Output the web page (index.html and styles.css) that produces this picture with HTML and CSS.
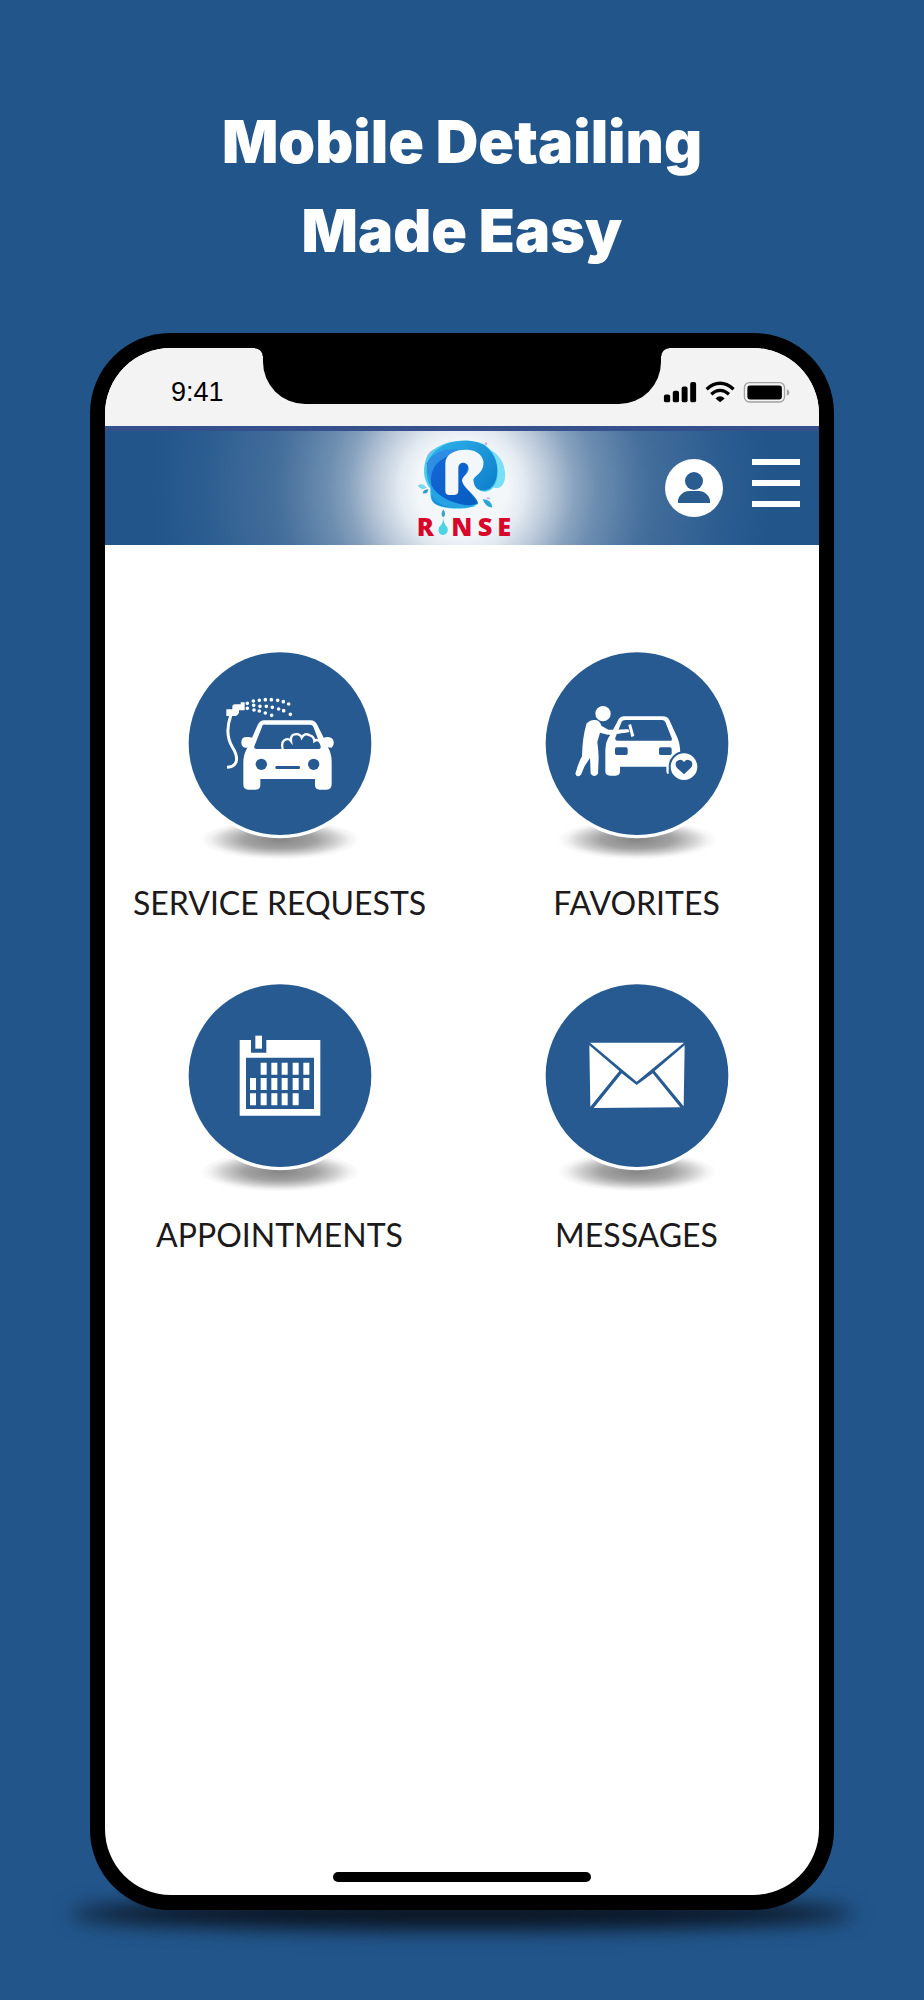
FILE: index.html
```html
<!DOCTYPE html>
<html lang="en">

<head>
  <meta charset="UTF-8">
  <meta name="viewport" content="width=device-width, initial-scale=1.0">
  <title>Rinse - Mobile Detailing Made Easy</title>
  <link rel="stylesheet" href="styles.css">
</head>

<body>
  <h1 class="headline">Mobile Detailing<br>Made Easy</h1>

  <div class="phone">
    <div class="screen">
      <div class="notch"></div>

      <div class="status-bar">
        <span class="time">9:41</span>
        <svg class="status-icons" viewBox="550 180 390 70" aria-hidden="true">
          <!-- signal -->
          <rect x="553" y="221" width="19" height="24" rx="6" />
          <rect x="580" y="210" width="19" height="35" rx="6" />
          <rect x="607" y="197" width="18" height="48" rx="6" />
          <rect x="633" y="183" width="18" height="62" rx="6" />
          <!-- wifi -->
          <g fill="none" stroke="#000" stroke-width="10">
            <path d="M683 205Q724 169 765 205" />
            <path d="M697 220Q724 197 751 220" />
          </g>
          <path d="M710 233Q724 220 738 233L724 245Z" />
          <!-- battery -->
          <rect x="798" y="185" width="122" height="59" rx="15" fill="none" stroke="#a3a3a3" stroke-width="4" />
          <rect x="807" y="194" width="105" height="42" rx="7" />
          <path d="M927 205Q935 208 935 215Q935 222 927 225Z" fill="#a3a3a3" />
        </svg>
      </div>

      <header class="app-header">
        <svg class="logo" viewBox="50 42 294 291" role="img" aria-label="Rinse">
          <defs>
            <linearGradient id="deep" x1="0" y1="0" x2="1" y2="1">
              <stop offset="0" stop-color="#1467d8" />
              <stop offset="1" stop-color="#075cc0" />
            </linearGradient>
            <linearGradient id="swirl" x1="0" y1="0" x2="1" y2="1">
              <stop offset="0" stop-color="#30b5ec" />
              <stop offset="1" stop-color="#0874c5" />
            </linearGradient>
          </defs>
          <path d="M78 125C76 82 97 65 130 66L160 80L90 140Z" fill="#b3a5ed" />
          <path d="M240 65C287 63 321 105 317 155C313 188 290 192 276 180Z" fill="#78dff7" />
          <path d="M95 78C130 40 215 35 252 54C288 74 302 120 293 162C282 203 246 205 225 184L235 235C205 255 135 251 108 235C90 221 92 200 93 188C65 158 70 101 95 78Z" fill="#4ed0ed" />
          <path d="M102 81C141 37 220 37 255 58C291 84 299 123 291 158C280 196 247 202 226 183L236 233C194 251 130 249 105 232C89 218 99 202 97 186C70 142 83 102 102 81Z" fill="url(#swirl)" />
          <path d="M82 112C104 66 165 60 222 81L190 210C142 220 85 185 82 112Z" fill="#2e8ee4" />
          <path d="M97 180C87 123 122 92 178 81L213 108L190 168L235 231C195 246 126 239 97 180Z" fill="url(#deep)" />
          <path d="M94 178C119 216 166 239 230 240C174 254 91 249 94 178Z" fill="#25a3e4" />
          <!-- cut-out in the drop -->
          <path d="M138 194V112C138 82 174 68 211 72C243 76 258 101 251 122C245 144 226 148 222 161C223 183 237 195 256 200L275 210L249 216L235 226C222 201 189 183 188 163C190 149 208 143 208 128C207 106 180 104 177 123V194Q177 207 163 207H150Q138 207 138 194Z" fill="#f3f7fa" />
          <path d="M55 179Q70 168 82 185Q65 195 55 179" fill="#79d9ef" />
          <path d="M70 202Q72 190 87 190Q86 205 70 202" fill="#329cc9" />
          <path d="M250 220Q275 220 279 244Q260 246 250 220" fill="#28a5d5" />
          <path d="M260 215Q271 211 273 220Q263 221 260 215" fill="#c5abee" />
          <circle cx="260" cy="53" r="4" fill="#c3acef" />
          <path d="M132 250Q143 267 132 274Q121 267 132 250" fill="#3aa4cc" />
          <path d="M132 274Q132 293 144 304C154 332 110 337 119 304Q132 293 132 274" fill="#4ed3e4" />
          <text class="logo-text" y="329" x="52 156 235 294">RNSE</text>
        </svg>
        <div class="header-actions">
          <button class="icon-button" type="button" aria-label="Profile">
            <svg class="profile-icon" viewBox="0 0 58 58">
              <circle cx="29" cy="29" r="29" fill="#fff" />
              <circle cx="29" cy="22" r="9" fill="#2a5c90" />
              <path d="M13 44V41C14 36 19 32 24 32H34C39 32 44 36 45 41V44Z" fill="#2a5c90" />
            </svg>
          </button>
          <button class="icon-button" type="button" aria-label="Menu">
            <svg class="menu-icon" viewBox="0 0 48 48">
              <path d="M0 0H48V6H0ZM0 21H48V27H0ZM0 42H48V48H0Z" fill="#fff" />
            </svg>
          </button>
        </div>
      </header>

      <nav class="tiles">
        <a class="tile" href="#services">
          <svg class="tile-icon" viewBox="192 24 576 636" aria-hidden="true">
            <defs>
              <radialGradient id="shade">
                <stop offset="0" stop-color="#858585" />
                <stop offset=".45" stop-color="#a2a2a2" />
                <stop offset=".7" stop-color="#cfcfcf" />
                <stop offset=".88" stop-color="#f3f3f3" />
                <stop offset="1" stop-color="#fff" />
              </radialGradient>
            </defs>
            <ellipse cx="480" cy="596" rx="240" ry="60" fill="url(#shade)" />
            <circle cx="480" cy="308" r="284" fill="#fff" />
            <circle cx="480" cy="308" r="274" fill="#265a90" />
            <g fill="#fff">
              <path d="M319 205H337V196Q337 190 345 190H362V184H374V208H357V215Q352 225 344 225H319Z" />
              <path d="M332 224C319 262 321 292 337 318C360 355 350 378 321 379" fill="none" stroke="#fff" stroke-width="9" />
              <g fill="none" stroke="#fff" stroke-width="11" stroke-linecap="round">
                <path d="M382 187h0M400 180h0M418 178h0M436 176h0M454 176h0M473 178h0M490 182h0M506 189h0" />
                <path d="M382 202h0M401 193h0M420 196h0M439 196h0M457 199h0M476 204h0M491 209h0M511 220h0" />
                <path d="M402 207h0M418 210h0M436 216h0M455 223h0" />
              </g>
              <path fill-rule="evenodd" d="M396 290L413 252Q419 238 433 238H571Q586 238 592 252L611 290Q629 285 638 294Q646 309 635 320L624 319Q635 339 635 362V429Q635 446 620 446H599Q585 446 585 432V414H421V432Q421 446 407 446H385Q370 446 370 430V364Q370 340 382 320Q365 322 364 306Q363 288 380 288Q390 287 396 290ZM428 253L403 316Q401 324 410 324H594Q604 324 602 316L580 257Q577 251 570 251H435Q430 250 428 253Z" />
              <path d="M488 324Q482 300 498 295Q508 293 513 300Q511 282 524 280Q540 277 545 290Q554 274 569 283Q582 286 583 300Q593 292 602 305" fill="none" stroke="#fff" stroke-width="7" />
            </g>
            <g fill="#265a90">
              <circle cx="424" cy="370" r="17" />
              <circle cx="581" cy="370" r="17" />
              <rect x="466" y="375" width="74" height="9" rx="4" />
            </g>
          </svg>
          <span class="tile-label">SERVICE REQUESTS</span>
        </a>

        <a class="tile" href="#favorites">
          <svg class="tile-icon" viewBox="35 24 576 636" aria-hidden="true">
            <ellipse cx="323" cy="596" rx="240" ry="60" fill="url(#shade)" />
            <circle cx="323" cy="308" r="284" fill="#fff" />
            <circle cx="323" cy="308" r="274" fill="#265a90" />
            <g fill="#fff">
              <circle cx="221" cy="218" r="23" />
              <path d="M172 247Q184 235 199 237Q212 239 216 254L237 266L297 266L300 273L235 281L212 275L204 303Q207 326 208 349L206 398Q195 412 184 398L182 351L166 375L155 401Q143 412 138 398Q148 363 158 346Q159 289 172 247Z" />
              <path fill-rule="evenodd" d="M243 281L264 242Q270 226 285 226H399Q416 226 421 239L445 292Q453 311 453 344Q416 356 418 398Q412 402 411 391V377H272V391Q272 404 259 404H242Q228 404 228 391V326Q229 299 243 281ZM277 242L258 290Q256 299 265 299H425Q429 298 427 291L408 243Q405 237 398 237H288Q280 237 277 242Z" />
              <path d="M240 268L297 265L300 273L240 282Z" />
              <circle cx="464" cy="377" r="43" stroke="#265a90" stroke-width="6" />
              <path d="M297 252L305 249L315 285L306 288Z" />
            </g>
            <g fill="#265a90">
              <rect x="257" y="319" width="38" height="23" rx="5" />
              <rect x="389" y="319" width="38" height="23" rx="5" />
              <path d="M464 400L443 381Q435 370 442 361Q454 350 464 363Q474 350 486 361Q493 371 484 381Z" />
            </g>
          </svg>
          <span class="tile-label">FAVORITES</span>
        </a>

        <a class="tile" href="#appointments">
          <svg class="tile-icon" viewBox="192 31 576 636" aria-hidden="true">
            <ellipse cx="480" cy="603" rx="240" ry="60" fill="url(#shade)" />
            <circle cx="480" cy="315" r="284" fill="#fff" />
            <circle cx="480" cy="315" r="274" fill="#265a90" />
            <path fill-rule="evenodd" d="M359 208H393V246H439V208H601V435H359ZM378 261V415H582V261Z" fill="#fff" />
            <path d="M406 195h20v39h-20Z" fill="#fff" />
            <path d="M422 276h18v36h-18ZM454 276h18v36h-18ZM485 276h18v36h-18ZM518 276h18v36h-18ZM550 276h18v36h-18ZM390 322h18v36h-18ZM422 322h18v36h-18ZM454 322h18v36h-18ZM485 322h18v36h-18ZM518 322h18v36h-18ZM550 322h18v36h-18ZM390 368h18v36h-18ZM422 368h18v36h-18ZM454 368h18v36h-18ZM485 368h18v36h-18ZM518 368h18v36h-18Z" fill="#fff" />
          </svg>
          <span class="tile-label">APPOINTMENTS</span>
        </a>

        <a class="tile" href="#messages">
          <svg class="tile-icon" viewBox="35 31 576 636" aria-hidden="true">
            <ellipse cx="323" cy="603" rx="240" ry="60" fill="url(#shade)" />
            <circle cx="323" cy="315" r="284" fill="#fff" />
            <circle cx="323" cy="315" r="274" fill="#265a90" />
            <g fill="#fff">
              <path d="M182 216H464L322 333Z" />
              <path d="M180 224L270 301L183 408Z" />
              <path d="M466 224L376 301L463 407Z" />
              <path d="M193 412L277 308L322 343L370 308L453 410Z" />
            </g>
          </svg>
          <span class="tile-label">MESSAGES</span>
        </a>
      </nav>

      <div class="home-bar"></div>
    </div>
  </div>
</body>

</html>
```
FILE: styles.css
```css
* {
  box-sizing: border-box;
}

body {
  display: flex;
  flex-direction: column;
  min-height: 100vh;
  margin: 0;
  padding: 97px 90px 90px;
  background: #22568b;
  font-family: Lato, "Liberation Sans", sans-serif;
}

.headline {
  margin: 0 0 58px;
  color: #fff;
  font-family: Inter, "Liberation Sans", sans-serif;
  font-size: 59px;
  font-weight: 900;
  line-height: 89px;
  text-align: center;
}

.phone {
  position: relative;
  display: flex;
  flex: 1;
  padding: 15px;
  border-radius: 80px;
  background: #000;
}

/* soft floor shadow under the phone */
.phone::before {
  content: "";
  position: absolute;
  z-index: -1;
  right: -20px;
  bottom: -20px;
  left: -20px;
  height: 32px;
  border-radius: 50%;
  background: #0a1320;
  filter: blur(10px);
}

.screen {
  position: relative;
  display: flex;
  flex: 1;
  flex-direction: column;
  overflow: hidden;
  border-radius: 66px;
  background: #fff;
}

.notch {
  position: absolute;
  top: 0;
  left: 50%;
  width: 398px;
  height: 56px;
  margin-left: -199px;
  border-radius: 0 0 42px 42px;
  background: #000;
}

.notch::before,
.notch::after {
  content: "";
  position: absolute;
  top: 0;
  width: 8px;
  height: 8px;
}

.notch::before {
  right: 100%;
  background: radial-gradient(circle at 0 100%, transparent 7px, #000 8px);
}

.notch::after {
  left: 100%;
  background: radial-gradient(circle at 100% 100%, transparent 7px, #000 8px);
}

.status-bar {
  display: flex;
  align-items: center;
  justify-content: space-between;
  height: 78px;
  padding: 10px 27px 0 66px;
  background: #f3f3f3;
}

.time {
  color: #000;
  font-family: "Liberation Sans", Arial, sans-serif;
  font-size: 27px;
  line-height: 32px;
}

.status-icons {
  width: 130px;
  height: 23px;
}

.app-header {
  display: grid;
  grid-template-columns: 1fr auto 1fr;
  align-items: center;
  height: 119px;
  padding: 0 19px 0 25px;
  border-top: 5px solid #35508a;
  background: radial-gradient(circle at 50% 50%, #f3f7fa 45px, #e3eaf1 62px, #b5c4d6 90px, #88a2be 113px, #6c8db0 135px, #446e9b 185px, #2a5c90 265px, #22568b 310px);
}

.logo {
  grid-column: 2;
  width: 98px;
  height: 97px;
  overflow: visible;
}

.logo-text {
  fill: #d8082b;
  font-family: "Open Sans", sans-serif;
  font-size: 76px;
  font-weight: 800;
}

.header-actions {
  display: flex;
  align-items: center;
  justify-content: flex-end;
  gap: 29px;
}

.icon-button {
  padding: 0;
  border: 0;
  background: none;
  cursor: pointer;
}

.profile-icon {
  display: block;
  width: 58px;
  height: 58px;
}

.menu-icon {
  display: block;
  width: 48px;
  height: 48px;
  margin-bottom: 10px;
}

.tiles {
  display: grid;
  flex: 1;
  grid-template-columns: 50% 50%;
  align-content: start;
  row-gap: 56px;
  padding-top: 104px;
}

.tile {
  display: flex;
  flex-direction: column;
  align-items: center;
  gap: 20px;
  padding-right: 8px;
  color: #1c1a1b;
  text-decoration: none;
}

.tile-icon {
  width: 192px;
  height: 212px;
}

.tile-label {
  font-size: 32px;
  line-height: 44px;
  white-space: nowrap;
}

.home-bar {
  align-self: center;
  width: 36%;
  height: 10px;
  margin-bottom: 13px;
  border-radius: 5px;
  background: #000;
}
```
